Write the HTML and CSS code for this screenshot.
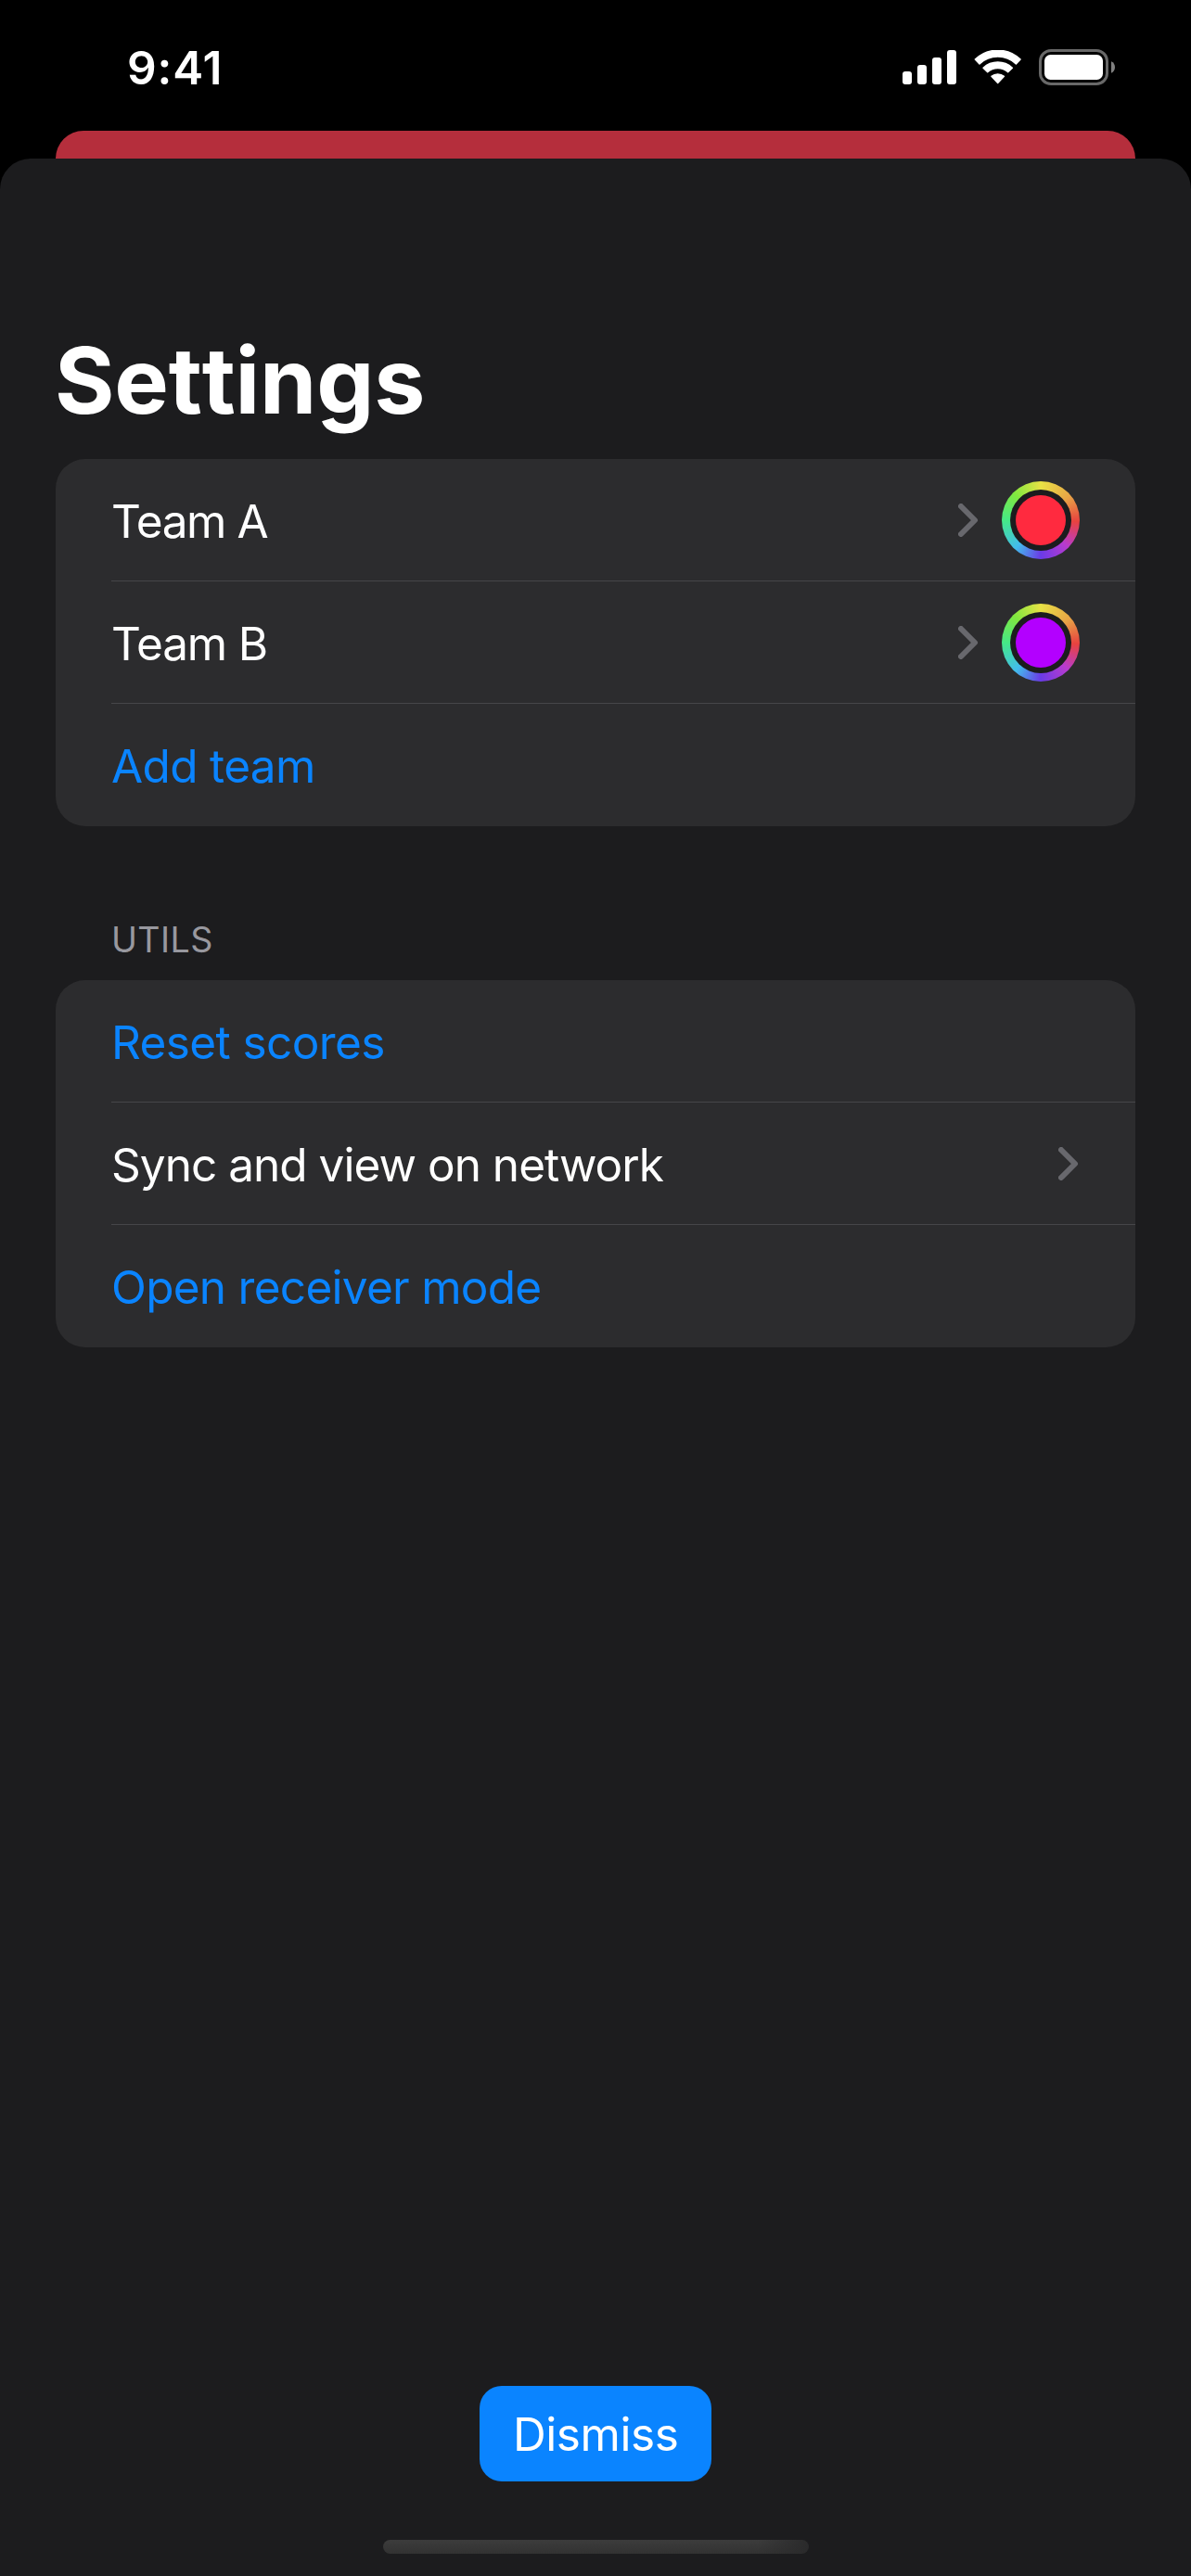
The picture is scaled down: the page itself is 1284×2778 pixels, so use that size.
FILE: index.html
```html
<!DOCTYPE html>
<html lang="en">
<head>
<meta charset="utf-8">
<title>Settings</title>
<link rel="stylesheet" href="styles.css">
</head>
<body>
<div class="screen">
  <header class="status-bar">
    <time class="clock">9:41</time>
    <div class="indicators">
      <svg class="signal" width="58" height="38" viewBox="0 0 58 38" fill="#fff">
        <rect x="0" y="23" width="10" height="14" rx="3"/>
        <rect x="16" y="16" width="10" height="21" rx="3"/>
        <rect x="32" y="8" width="10" height="29" rx="3"/>
        <rect x="48" y="0" width="10" height="37" rx="3"/>
      </svg>
      <svg class="wifi" width="52" height="38" viewBox="0 0 52 38" fill="#fff" stroke="#fff" stroke-width="1.4" stroke-linejoin="round">
        <path d="M1.3 10.1A35 35 0 0 1 50.1 10.1L45.4 14.9A28.6 28.6 0 0 0 6 14.9Z"/>
        <path d="M10 19.2A23 23 0 0 1 41.4 19.2L36.7 23.7A16.4 16.4 0 0 0 14.7 23.7Z"/>
        <path d="M18.9 28.3A11 11 0 0 1 32.5 28.3L25.7 35.6Z"/>
      </svg>
      <svg class="battery" width="83" height="40" viewBox="0 0 83 40">
        <rect x="1.5" y="1.5" width="72" height="36" rx="11.5" fill="none" stroke="#686868" stroke-width="3"/>
        <rect x="6" y="6" width="63" height="27" rx="6.5" fill="#fff"/>
        <path d="M78 13.3C80.6 14.4 82 16.8 82 19.5S80.600 24.6 78 25.7Z" fill="#808080"/>
      </svg>
    </div>
  </header>
  <div class="backdrop-card"></div>
  <main class="sheet">
    <h1 class="title">Settings</h1>
    <section class="group">
      <div class="row">
        <span class="label team-a">Team A</span>
        <svg class="chevron" width="22" height="36" viewBox="0 0 22 36"><path d="M3 3L18 18L3 33"/></svg>
        <span class="swatch"><span class="swatch-gap"><span class="swatch-fill red"></span></span></span>
      </div>
      <div class="row">
        <span class="label team-b">Team B</span>
        <svg class="chevron" width="22" height="36" viewBox="0 0 22 36"><path d="M3 3L18 18L3 33"/></svg>
        <span class="swatch"><span class="swatch-gap"><span class="swatch-fill purple"></span></span></span>
      </div>
      <div class="row"><span class="label action add">Add team</span></div>
    </section>
    <h2 class="group-title">UTILS</h2>
    <section class="group">
      <div class="row"><span class="label action reset">Reset scores</span></div>
      <div class="row">
        <span class="label sync">Sync and view on network</span>
        <svg class="chevron last" width="22" height="36" viewBox="0 0 22 36"><path d="M3 3L18 18L3 33"/></svg>
      </div>
      <div class="row"><span class="label action receiver">Open receiver mode</span></div>
    </section>
    <footer class="footer">
      <button class="dismiss">Dismiss</button>
      <div class="home-indicator"></div>
    </footer>
  </main>
</div>
</body>
</html>
```
FILE: styles.css
```css
* { box-sizing: border-box; }

body {
  margin: 0;
  background: #000;
  color: #fff;
  font: 400 49.5px/60px Inter, "Liberation Sans", sans-serif;
}

.screen {
  display: flex;
  flex-direction: column;
  width: 1284px;
  height: 2778px;
  overflow: hidden;
}

.status-bar {
  display: flex;
  justify-content: space-between;
  align-items: flex-start;
  height: 141px;
  padding: 43px 81px 0 137px;
}

.clock {
  font-weight: 600;
  letter-spacing: 0.9px;
}

.indicators {
  display: flex;
  padding-top: 10px;
}

.signal { margin: 1px 19px 0 0; }
.wifi { margin: 1px 18px 0 0; }

.backdrop-card {
  height: 30px;
  margin: 0 60px;
  border-radius: 30px 30px 0 0;
  background: #b52e3c;
}

.sheet {
  display: flex;
  flex-direction: column;
  flex: 1;
  padding: 180px 60px 24px;
  border-radius: 33px 33px 0 0;
  background: #1c1c1e;
}

.title {
  margin: 0 0 24px;
  font-size: 98.5px;
  font-weight: 700;
  line-height: 120px;
  letter-spacing: -0.2px;
  font-kerning: none;
  text-indent: -1px;
}

.group {
  border-radius: 32px;
  background: #2c2c2e;
}

.row {
  display: flex;
  align-items: center;
  height: 132px;
  margin-left: 60px;
  padding-right: 60px;
}

.row + .row { box-shadow: 0 -1px #464649; }

.label {
  flex: 1;
  padding-top: 2px;
  white-space: nowrap;
}

.action { color: #0a84ff; }
.team-a { letter-spacing: -1.4px; }
.team-b { letter-spacing: -1.15px; }
.add { letter-spacing: -0.65px; }
.reset { letter-spacing: -0.6px; }
.sync { letter-spacing: -0.97px; }
.receiver { letter-spacing: -0.72px; }

.chevron {
  margin-right: 25px;
  fill: none;
  stroke: #68686d;
  stroke-width: 6;
  stroke-linecap: round;
  stroke-linejoin: round;
}

.chevron.last { margin-right: 1px; }

.swatch,
.swatch-gap {
  display: grid;
  place-items: center;
  border-radius: 50%;
}

.swatch {
  width: 84px;
  height: 84px;
  background: conic-gradient(#e8e245, #e8a546 50deg, #e8423f 92deg, #b83bcf 135deg, #6a3be6 180deg, #42bdec 222deg, #45e886 270deg, #80e83f 315deg, #e8e245);
}

.swatch-gap {
  width: 66px;
  height: 66px;
  background: #1c1c1e;
}

.swatch-fill {
  width: 54px;
  height: 54px;
  border-radius: 50%;
}

.red { background: #ff2a3f; }
.purple { background: #b300ff; }

.group-title {
  margin: 100px 0 21px 60px;
  color: #98989f;
  font-size: 37.6px;
  font-weight: 400;
  line-height: 45px;
  letter-spacing: 0.4px;
}

.footer {
  display: flex;
  flex-direction: column;
  align-items: center;
  gap: 63px;
  margin-top: auto;
}

.dismiss {
  width: 250px;
  height: 103px;
  padding: 1px 0 0 36px;
  border: 0;
  border-radius: 24px;
  background: #0a84ff;
  color: #fff;
  font: inherit;
  letter-spacing: -0.44px;
  text-align: left;
}

.home-indicator {
  width: 459px;
  height: 15px;
  border-radius: 8px;
  background:
    linear-gradient(90deg, transparent 88%, #2a2a2b),
    linear-gradient(#3c3c3c, #323232);
}
```
